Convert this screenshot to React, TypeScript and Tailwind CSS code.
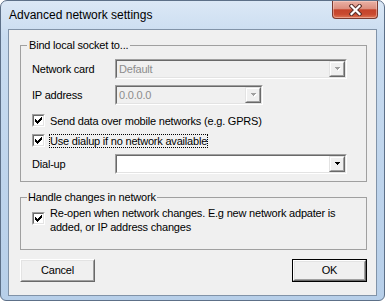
import React from "react";

function Arrow({ disabled }: { disabled?: boolean }) {
  const c = disabled ? "#a0a0a0" : "#000000";
  return (
    <svg width="6" height="4" viewBox="0 0 6 4" shapeRendering="crispEdges">
      {disabled && (
        <>
          <rect x="1" y="1" width="5" height="1" fill="#ffffff" />
          <rect x="2" y="2" width="3" height="1" fill="#ffffff" />
          <rect x="3" y="3" width="1" height="1" fill="#ffffff" />
        </>
      )}
      <rect x="0" y="0" width="5" height="1" fill={c} />
      <rect x="1" y="1" width="3" height="1" fill={c} />
      <rect x="2" y="2" width="1" height="1" fill={c} />
    </svg>
  );
}

function DropButton({ disabled }: { disabled?: boolean }) {
  return (
    <div className="h-full w-[16px] shrink-0 border border-t-[#e3e3e3] border-l-[#e3e3e3] border-r-[#696969] border-b-[#696969]">
      <div className="flex h-full w-full items-center justify-center border border-t-white border-l-white border-r-[#a0a0a0] border-b-[#a0a0a0] bg-[#f0f0f0] pl-[1px]">
        <Arrow disabled={disabled} />
      </div>
    </div>
  );
}

function Combo({ w, value, disabled }: { w: string; value?: string; disabled?: boolean }) {
  return (
    <div className={`${w} h-[20px] shrink-0 border border-t-[#a0a0a0] border-l-[#a0a0a0] border-r-white border-b-white`}>
      <div
        className={`flex h-full items-center border border-t-[#696969] border-l-[#696969] border-r-[#e3e3e3] border-b-[#e3e3e3] ${
          disabled ? "bg-[#f0f0f0]" : "bg-white"
        }`}
      >
        <span className={`flex-1 pl-[2px] text-[11px] leading-[13px] ${disabled ? "text-[#8d8d8d]" : "text-black"}`}>
          {value}
        </span>
        <DropButton disabled={disabled} />
      </div>
    </div>
  );
}

function CheckBox() {
  const rows: [number, number, number][] = [
    [6, 0, 1],
    [5, 1, 2],
    [0, 2, 1],
    [4, 2, 3],
    [0, 3, 2],
    [3, 3, 3],
    [0, 4, 5],
    [1, 5, 3],
    [2, 6, 1],
  ];
  return (
    <div className="h-[13px] w-[13px] shrink-0 border border-t-[#a0a0a0] border-l-[#a0a0a0] border-r-white border-b-white">
      <div className="flex h-full w-full items-center justify-center border border-t-[#696969] border-l-[#696969] border-r-[#e3e3e3] border-b-[#e3e3e3] bg-white">
        <svg width="7" height="7" viewBox="0 0 7 7" shapeRendering="crispEdges">
          {rows.map(([x, y, w], i) => (
            <rect key={i} x={x} y={y} width={w} height={1} fill="#000" />
          ))}
        </svg>
      </div>
    </div>
  );
}

function PushButton({ children, isDefault }: { children: React.ReactNode; isDefault?: boolean }) {
  const inner = (
    <div className="h-full w-full border border-t-white border-l-white border-r-[#696969] border-b-[#696969]">
      <div className="flex h-full w-full items-center justify-center border border-t-[#e3e3e3] border-l-[#e3e3e3] border-r-[#a0a0a0] border-b-[#a0a0a0] bg-[#f0f0f0] text-[11px] leading-[13px] text-black">
        {children}
      </div>
    </div>
  );
  return isDefault ? (
    <div className="h-[23px] w-[75px] border border-black">{inner}</div>
  ) : (
    <div className="h-[23px] w-[75px]">{inner}</div>
  );
}

function CloseButton() {
  return (
    <div className="mr-[-1px] flex h-[18px] w-[46px] items-center justify-center rounded-b-[4px] border border-t-0 border-[#7a3a30] bg-[linear-gradient(to_bottom,#eab1a5_0%,#dc8f7f_45%,#c5432b_52%,#c94a30_78%,#de7656_100%)] shadow-[inset_0_0_0_1px_rgba(255,220,210,0.45)]">
      <svg width="13" height="12" viewBox="0 0 13 12">
        <path d="M2.5 2 L10.5 10 M10.5 2 L2.5 10" stroke="#5a2f2a" strokeWidth="4.2" strokeLinecap="square" />
        <path d="M2.5 2 L10.5 10 M10.5 2 L2.5 10" stroke="#ffffff" strokeWidth="2.2" strokeLinecap="square" />
      </svg>
    </div>
  );
}

export default function App() {
  return (
    <div className="h-[301px] w-[385px] bg-white font-['Liberation_Sans',Arial,sans-serif]">
      <div className="flex h-[301px] w-[385px] flex-col rounded-t-[7px] rounded-b-[6px] border border-[#5d7088] bg-[linear-gradient(to_bottom,#dbe8f6_0%,#c9dcf0_12%,#bed4ec_60%,#b7cfe9_100%)] px-[7px]">
        <div className="flex h-[28px] shrink-0 items-start justify-between">
          <span className="pl-[1px] pt-[7px] text-[12px] leading-[15px] text-black">Advanced network settings</span>
          <CloseButton />
        </div>
        <div className="flex h-[267px] shrink-0 flex-col border border-[#8193a8] bg-[#f0f0f0] pl-[11px] pt-[8px] tracking-[-0.2px]">
          <fieldset className="m-0 w-[347px] border border-[#a0a0a0] p-0">
            <legend className="ml-[6px] px-[2px] text-[11px] leading-[14px] text-black">Bind local socket to...</legend>
            <div className="flex flex-col pl-[11px] pt-[7px] pb-[7px] text-[11px] leading-[13px] text-black">
              <div className="flex h-[20px] items-center">
                <span className="w-[83px] shrink-0">Network card</span>
                <Combo w="w-[232px]" value="Default" disabled />
              </div>
              <div className="mt-[6px] flex h-[20px] items-center">
                <span className="w-[83px] shrink-0">IP address</span>
                <Combo w="w-[148px]" value="0.0.0.0" disabled />
              </div>
              <div className="mt-[9px] flex h-[13px] items-center">
                <CheckBox />
                <span className="ml-[4px] border border-transparent leading-[12px]">
                  Send data over mobile networks (e.g. GPRS)
                </span>
              </div>
              <div className="mt-[7px] flex h-[13px] items-center">
                <CheckBox />
                <span className="ml-[4px] border border-dotted border-black leading-[12px]">
                  Use dialup if no network available
                </span>
              </div>
              <div className="mt-[7px] flex h-[20px] items-center">
                <span className="w-[83px] shrink-0">Dial-up</span>
                <Combo w="w-[232px]" value="" />
              </div>
            </div>
          </fieldset>
          <fieldset className="m-0 mt-[8px] w-[347px] border border-[#a0a0a0] p-0">
            <legend className="ml-[6px] px-[1px] text-[11px] leading-[14px] text-black">Handle changes in network</legend>
            <div className="flex items-start pl-[11px] pt-[2px] pb-[15px] text-[11px] leading-[14px] text-black">
              <div className="mt-[6px]">
                <CheckBox />
              </div>
              <span className="ml-[5px]">
                Re-open when network changes. E.g new network adpater is
                <br />
                added, or IP address changes
              </span>
            </div>
          </fieldset>
          <div className="mt-[9px] flex w-[347px] justify-between">
            <PushButton>Cancel</PushButton>
            <PushButton isDefault>OK</PushButton>
          </div>
        </div>
      </div>
    </div>
  );
}
